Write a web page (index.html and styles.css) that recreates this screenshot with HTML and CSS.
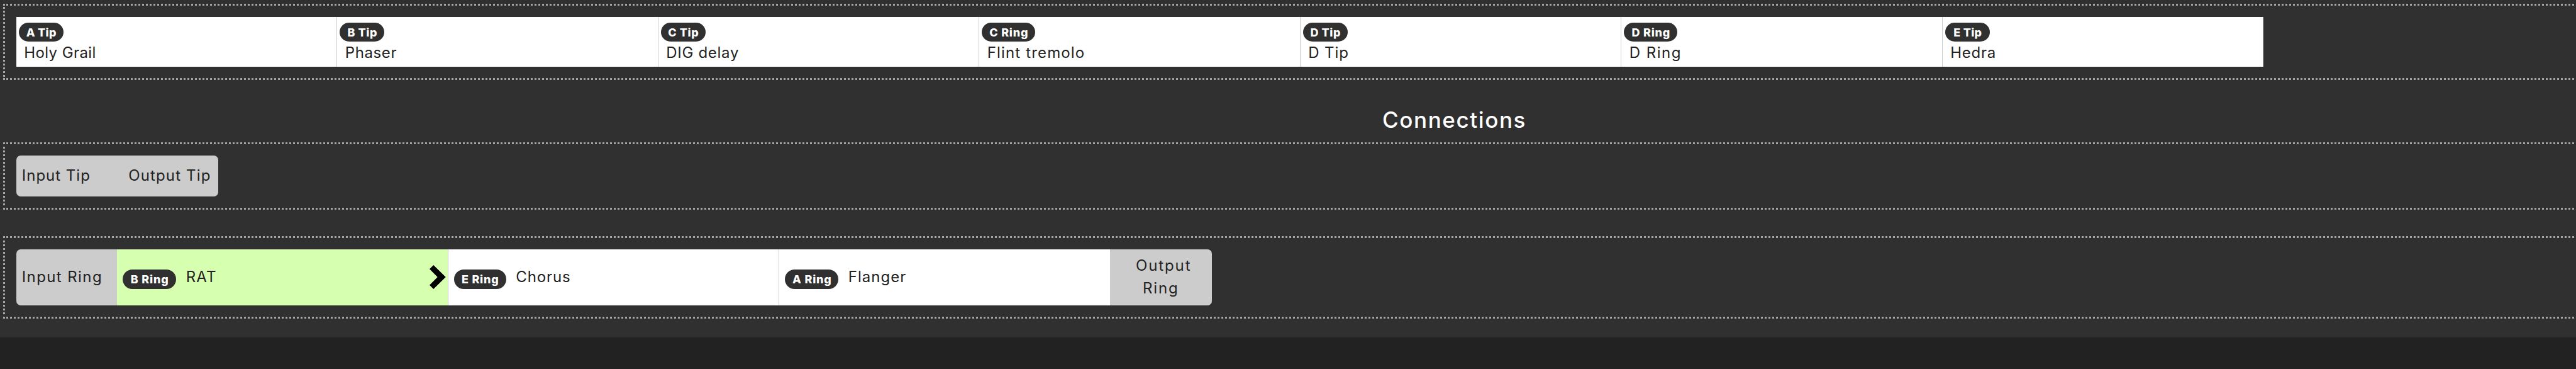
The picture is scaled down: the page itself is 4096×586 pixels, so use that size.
FILE: index.html
```
<!DOCTYPE html>
<html lang="en">
<head>
	<meta charset="utf-8">
	<title>Pedal Connections</title>
	<link rel="stylesheet" href="styles.css">
</head>
<body>
	<div class="main">
		<div class="box pedals">
			<div class="pedal holy-grail"><span class="badge a-tip">A Tip</span><div class="name">Holy Grail</div></div>
			<div class="pedal phaser"><span class="badge">B Tip</span><div class="name">Phaser</div></div>
			<div class="pedal dig"><span class="badge">C Tip</span><div class="name">DIG delay</div></div>
			<div class="pedal flint"><span class="badge ring">C Ring</span><div class="name">Flint tremolo</div></div>
			<div class="pedal d-tip"><span class="badge">D Tip</span><div class="name">D Tip</div></div>
			<div class="pedal d-ring"><span class="badge ring">D Ring</span><div class="name">D Ring</div></div>
			<div class="pedal hedra"><span class="badge e-tip">E Tip</span><div class="name">Hedra</div></div>
		</div>

		<h2>Connections</h2>

		<div class="box chain tip-chain">
			<div class="end input">Input Tip</div>
			<div class="end output">Output Tip</div>
		</div>

		<div class="box chain ring-chain">
			<div class="end input">Input Ring</div>
			<div class="pedal active rat">
				<span class="badge ring">B Ring</span><div class="name">RAT</div>
				<svg class="arrow" viewBox="0 0 26 38"><path d="M6.3 0L25.7 19L6.3 38L0 31.7L12.7 19L0 6.3Z"/></svg>
			</div>
			<div class="pedal chorus"><span class="badge ring">E Ring</span><div class="name">Chorus</div></div>
			<div class="pedal flanger"><span class="badge ring">A Ring</span><div class="name">Flanger</div></div>
			<div class="end output"><div>Output</div><div class="second">Ring</div></div>
		</div>
	</div>
</body>
</html>
```
FILE: styles.css
```
* {
	box-sizing: border-box;
}
html, body {
	margin: 0;
	height: 100%;
	overflow: hidden;
	background: #222;
	color: #222;
	font: 24px/29px Inter, sans-serif;
}
.main {
	height: 536px;
	padding: 6px 0 0 5px;
	background: #303030;
	border-bottom: 1px solid #2a2a2a;
}

/* the boxes run past the right edge of the window */
.box {
	display: flex;
	width: 4615px;
	padding: 18px 17.75px;
	border: 3px dotted #a5a5a5;
}
h2 {
	width: 4615px;
	margin: 43px 0 16px;
	color: #fff;
	font-size: 35px;
	font-weight: 500;
	line-height: 40px;
	letter-spacing: 1.6px;
	text-align: center;
}

.pedal {
	width: 510.5px;
	height: 79px;
	padding: 9px 0 0 4px;
	background: #fff;
	border-right: 1px solid #ccc;
}
.badge {
	display: block;
	width: 71px;
	height: 30px;
	padding-left: 1px;
	border-radius: 15px;
	background: #303030;
	color: #fff;
	font-size: 18px;
	font-weight: 800;
	line-height: 31px;
	letter-spacing: 0.6px;
	text-align: center;
}
.ring {
	width: 85px;
	letter-spacing: 0.8px;
}
.a-tip, .e-tip {
	letter-spacing: 0.3px;
}
.name {
	margin: 3px 0 0 8.5px;
}
.holy-grail .name { letter-spacing: 0.4px; }
.phaser .name { letter-spacing: 0.6px; }
.dig .name { letter-spacing: 0.7px; }
.flint .name { letter-spacing: 1.15px; }
.d-tip .name { letter-spacing: 0.9px; }
.d-ring .name { letter-spacing: 1.5px; }
.hedra .name { letter-spacing: 0.75px; }
.rat .name { letter-spacing: 1.25px; }
.chorus .name { letter-spacing: 0.9px; }
.flanger .name { letter-spacing: 1px; }

.end {
	width: 160.4px;
	background: #ccc;
}
.input {
	padding-left: 9px;
	border-radius: 7px 0 0 7px;
}
.output {
	border-radius: 0 7px 7px 0;
}

.tip-chain .end {
	height: 65px;
	padding-top: 17px;
}
.tip-chain .input { letter-spacing: 1px; }
.tip-chain .output {
	padding-left: 18px;
	letter-spacing: 1.15px;
}

.ring-chain {
	margin-top: 42px;
}
.ring-chain .end {
	height: 89px;
}
.ring-chain .input {
	padding-top: 29px;
	letter-spacing: 1.4px;
}
.ring-chain .output {
	width: 161px;
	padding: 8px 0 0 40px;
	line-height: 36px;
	letter-spacing: 1.9px;
}
.second {
	padding-left: 11px;
}
.ring-chain .pedal {
	display: flex;
	width: 526.6px;
	height: 89px;
	padding: 0 3px 0 9px;
}
.ring-chain .badge {
	height: 31px;
	margin-top: 32px;
	border-radius: 16px;
}
.chorus .badge {
	width: 83px;
}
.ring-chain .name {
	margin: 29px 0 0 15.5px;
}
.ring-chain .active {
	background: #d7ffb0;
}
.arrow {
	width: 26px;
	height: 38px;
	margin: 25px 0 0 auto;
}
```
